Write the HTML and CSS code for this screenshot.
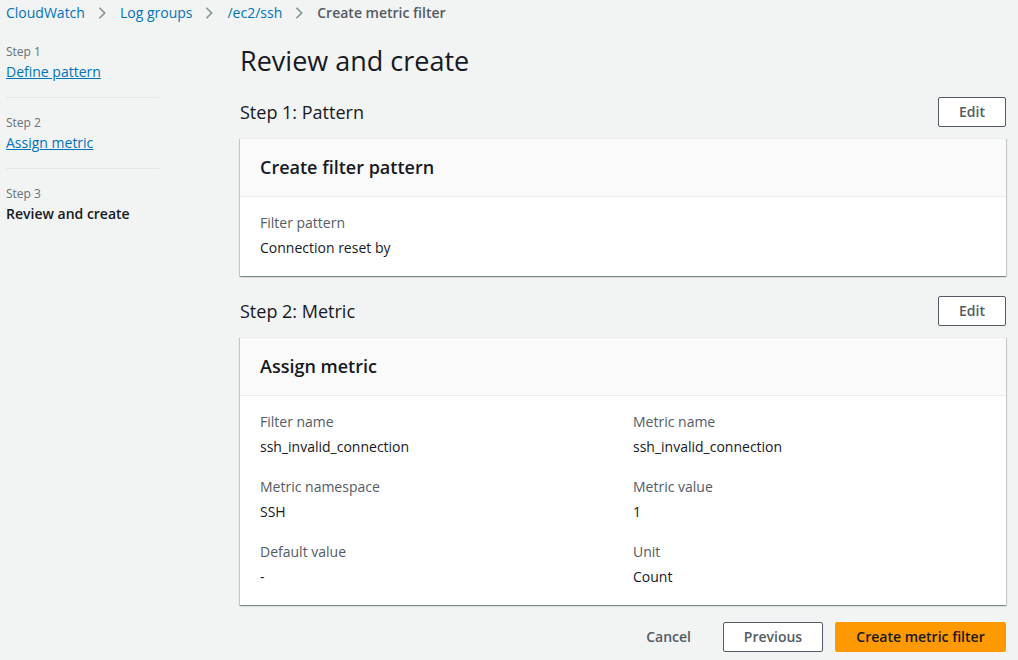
FILE: index.html
```html
<!DOCTYPE html>
<html>
<head>
<meta charset="utf-8">
<link rel="stylesheet" href="styles.css">
</head>
<body>
<nav class="breadcrumbs">
  <a href="#">CloudWatch</a>
  <svg class="chev" viewBox="0 0 16 16"><path d="M5 2l6 6-6 6" fill="none" stroke="#879596" stroke-width="2"/></svg>
  <a href="#">Log groups</a>
  <svg class="chev" viewBox="0 0 16 16"><path d="M5 2l6 6-6 6" fill="none" stroke="#879596" stroke-width="2"/></svg>
  <a href="#">/ec2/ssh</a>
  <svg class="chev" viewBox="0 0 16 16"><path d="M5 2l6 6-6 6" fill="none" stroke="#879596" stroke-width="2"/></svg>
  <span class="current">Create metric filter</span>
</nav>
<div class="layout">
  <aside class="steps">
    <div class="step">
      <div class="step-num">Step 1</div>
      <a class="step-link" href="#">Define pattern</a>
    </div>
    <div class="step">
      <div class="step-num">Step 2</div>
      <a class="step-link" href="#">Assign metric</a>
    </div>
    <div class="step last">
      <div class="step-num">Step 3</div>
      <div class="step-active">Review and create</div>
    </div>
  </aside>
  <main class="main">
    <h1 class="title">Review and create</h1>
    <section class="section">
      <div class="section-head">
        <h2>Step 1: Pattern</h2>
        <button class="btn">Edit</button>
      </div>
      <div class="card">
        <div class="card-head">Create filter pattern</div>
        <div class="card-body">
          <div class="kv">
            <div class="k">Filter pattern</div>
            <div class="v">Connection reset by</div>
          </div>
        </div>
      </div>
    </section>
    <section class="section">
      <div class="section-head">
        <h2>Step 2: Metric</h2>
        <button class="btn">Edit</button>
      </div>
      <div class="card">
        <div class="card-head">Assign metric</div>
        <div class="card-body grid">
          <div class="kv"><div class="k">Filter name</div><div class="v">ssh_invalid_connection</div></div>
          <div class="kv"><div class="k">Metric name</div><div class="v">ssh_invalid_connection</div></div>
          <div class="kv"><div class="k">Metric namespace</div><div class="v">SSH</div></div>
          <div class="kv"><div class="k">Metric value</div><div class="v">1</div></div>
          <div class="kv"><div class="k">Default value</div><div class="v">-</div></div>
          <div class="kv"><div class="k">Unit</div><div class="v">Count</div></div>
        </div>
      </div>
    </section>
    <div class="actions">
      <button class="btn link">Cancel</button>
      <button class="btn prev">Previous</button>
      <button class="btn primary">Create metric filter</button>
    </div>
  </main>
</div>
</body>
</html>
```
FILE: styles.css
```css
* { box-sizing: border-box; }
html, body { margin: 0; padding: 0; }
body {
  background: #f2f3f3;
  font-family: "Open Sans", "Noto Sans", sans-serif;
  font-size: 14px;
  line-height: 20px;
  color: #16191f;
  width: 1018px;
  height: 660px;
  overflow: hidden;
}
.breadcrumbs {
  display: flex;
  align-items: center;
  height: 24px;
  padding: 2px 0 0 6px;
}
.breadcrumbs a {
  color: #0073bb;
  text-decoration: none;
}
.chev {
  width: 14px;
  height: 14px;
  margin: 0 11px 0 10px;
}
.current {
  color: #545b64;
  font-weight: 600;
}
.layout {
  display: flex;
  padding: 13px 12px 0 6px;
}
.steps {
  width: 153px;
  flex: none;
  margin-right: 81px;
  padding-top: 2px;
}
.step {
  padding: 4px 0 15px;
  border-bottom: 1px solid #e4e7e7;
  margin-bottom: 12px;
}
.step.last { border-bottom: none; }
.step-num {
  font-size: 12px;
  line-height: 18px;
  color: #687078;
  margin-bottom: 1px;
}
.step-link {
  color: #0073bb;
  text-decoration: underline;
}
.step-active { font-weight: 600; }
.main { flex: 1; }
.title {
  margin: 0 0 18px;
  font-size: 27px;
  line-height: 36px;
  font-weight: 400;
  padding-top: 6px;
}
.section { margin-bottom: 20px; }
.section-head {
  display: flex;
  justify-content: space-between;
  align-items: center;
  margin-bottom: 11px;
}
.section-head h2 {
  margin: 0;
  font-size: 18px;
  font-weight: 400;
  line-height: 22px;
}
.btn {
  font-family: inherit;
  font-size: 14px;
  font-weight: 600;
  line-height: 20px;
  padding: 4px 20px;
  border: 1px solid #545b64;
  border-radius: 2px;
  background: #fff;
  color: #545b64;
  height: 30px;
}
.card {
  background: #fff;
  border-top: 1px solid #eaeded;
  box-shadow: 0 1px 1px 0 rgba(0,28,36,.3), 1px 1px 1px 0 rgba(0,28,36,.15), -1px 1px 1px 0 rgba(0,28,36,.15);
}
.card-head {
  background: #fafafa;
  border-bottom: 1px solid #eaeded;
  padding: 17px 20px 18px;
  font-size: 18px;
  line-height: 22px;
  font-weight: 600;
}
.card-body {
  padding: 16px 20px 18px;
}
.grid {
  display: grid;
  grid-template-columns: 1fr 1fr;
  column-gap: 20px;
  row-gap: 20px;
}
.k {
  color: #545b64;
  margin-bottom: 5px;
}
.actions {
  display: flex;
  justify-content: flex-end;
  align-items: center;
  margin-top: -3px;
}
.btn.link {
  border-color: transparent;
  background: transparent;
  margin-right: 11px;
}
.btn.prev { width: 100px; padding: 4px 0; margin-right: 12px; }
.btn.primary {
  width: 171px;
  padding: 4px 0;
  background: #ff9900;
  border-color: #ff9900;
  color: #16191f;
}
```
